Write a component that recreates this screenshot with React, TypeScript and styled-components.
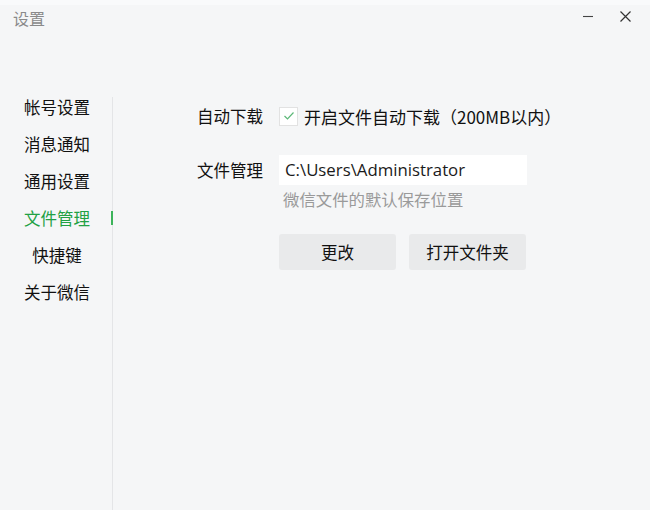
import React from "react";
import styled, { createGlobalStyle } from "styled-components";

const Global = createGlobalStyle`
  html, body { margin: 0; padding: 0; background: #f5f6f7; }
  body { font-family: "Noto Sans CJK SC", "Noto Sans", sans-serif; }
`;

const Window = styled.div`
  width: 650px;
  height: 510px;
  background: #f5f6f7;
  display: flex;
  flex-direction: column;
  overflow: hidden;
  border-top: 5px solid #f9fafb;
  box-sizing: border-box;
`;

const TitleBar = styled.div`
  height: 93px;
  display: flex;
  align-items: flex-start;
  justify-content: space-between;
  padding: 2px 0 0 13px;
  box-sizing: border-box;
`;

const Title = styled.div`
  font-size: 16px;
  line-height: 22px;
  color: #8a8a8a;
`;

const Controls = styled.div`
  display: flex;
  gap: 7px;
  margin-right: 10px;
  margin-top: -2px;
`;

const CtrlButton = styled.div`
  width: 30px;
  height: 22px;
  display: flex;
  align-items: center;
  justify-content: center;
  color: #333;
`;

const Body = styled.div`
  flex: 1;
  display: flex;
`;

const Sidebar = styled.nav`
  width: 112px;
  border-right: 1px solid #e4e5e7;
  display: flex;
  flex-direction: column;
  align-items: center;
  gap: 17px;
  margin-top: -1px;
`;

const NavItem = styled.div<{ $active?: boolean }>`
  position: relative;
  width: 100%;
  height: 20px;
  line-height: 20px;
  text-align: center;
  font-size: 16.5px;
  color: ${(p) => (p.$active ? "#22a144" : "#111")};
  padding-left: 2px;
  box-sizing: border-box;
`;

const Indicator = styled.span`
  position: absolute;
  right: -1px;
  top: 3px;
  width: 2px;
  height: 14px;
  background: #3cb35a;
`;

const Content = styled.div`
  flex: 1;
  padding: 3px 0 0 84px;
  display: flex;
  flex-direction: column;
`;

const Row = styled.div<{ $top?: number }>`
  display: flex;
  align-items: flex-start;
  margin-top: ${(p) => p.$top ?? 0}px;
`;

const Label = styled.div`
  width: 82px;
  flex-shrink: 0;
  font-size: 16.5px;
  line-height: 30px;
  color: #111;
`;

const Field = styled.div`
  display: flex;
  flex-direction: column;
`;

const CheckLine = styled.label`
  display: flex;
  align-items: center;
  height: 30px;
  gap: 6px;
  font-size: 17px;
  color: #111;
`;

const CheckBox = styled.span`
  width: 17px;
  height: 17px;
  background: #fff;
  border: 1px solid #e2e2e2;
  display: flex;
  align-items: center;
  justify-content: center;
`;

const PathInput = styled.div`
  width: 248px;
  height: 30px;
  background: #fff;
  box-sizing: border-box;
  padding-left: 6px;
  font-family: "Open Sans", "Noto Sans", sans-serif;
  font-size: 16.8px;
  line-height: 30px;
  color: #1a1a1a;
`;

const Hint = styled.div`
  margin-top: 2px;
  margin-left: 4px;
  font-size: 16.4px;
  line-height: 24px;
  color: #9a9a9a;
`;

const Buttons = styled.div`
  display: flex;
  gap: 13px;
  margin-left: 82px;
  margin-top: 23px;
`;

const Button = styled.button`
  width: 117px;
  height: 36px;
  border: none;
  border-radius: 3px;
  background: #e9eaeb;
  font-family: "Noto Sans CJK SC", sans-serif;
  font-size: 16.5px;
  color: #111;
  padding: 0;
`;

const nav = ["帐号设置", "消息通知", "通用设置", "文件管理", "快捷键", "关于微信"];

export default function App() {
  return (
    <>
      <Global />
      <Window>
        <TitleBar>
          <Title>设置</Title>
          <Controls>
            <CtrlButton>
              <svg width="12" height="12" viewBox="0 0 12 12">
                <path d="M1 6.5h10" stroke="#444" strokeWidth="1.1" />
              </svg>
            </CtrlButton>
            <CtrlButton>
              <svg width="11" height="11" viewBox="0 0 11 11">
                <path d="M0.5 0.5l10 10M10.5 0.5l-10 10" stroke="#333" strokeWidth="1.2" />
              </svg>
            </CtrlButton>
          </Controls>
        </TitleBar>
        <Body>
          <Sidebar>
            {nav.map((n) => (
              <NavItem key={n} $active={n === "文件管理"}>
                {n}
                {n === "文件管理" && <Indicator />}
              </NavItem>
            ))}
          </Sidebar>
          <Content>
            <Row>
              <Label>自动下载</Label>
              <CheckLine>
                <CheckBox>
                  <svg width="12" height="10" viewBox="0 0 12 10">
                    <path d="M1.5 5l3 3 6-6.5" fill="none" stroke="#5cb878" strokeWidth="1.2" />
                  </svg>
                </CheckBox>
                开启文件自动下载（200MB以内）
              </CheckLine>
            </Row>
            <Row $top={24}>
              <Label>文件管理</Label>
              <Field>
                <PathInput>C:\Users\Administrator</PathInput>
                <Hint>微信文件的默认保存位置</Hint>
              </Field>
            </Row>
            <Buttons>
              <Button>更改</Button>
              <Button>打开文件夹</Button>
            </Buttons>
          </Content>
        </Body>
      </Window>
    </>
  );
}
